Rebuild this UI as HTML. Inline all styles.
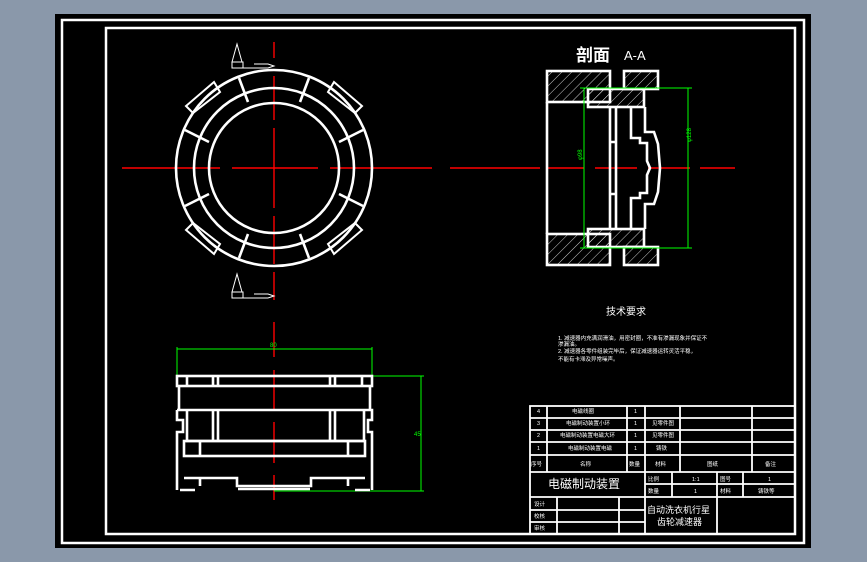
<!DOCTYPE html><html><head><meta charset="utf-8"><style>html,body{margin:0;padding:0;background:#8a98aa;width:867px;height:562px;overflow:hidden}svg{display:block}text{font-family:"Liberation Sans","Noto Sans CJK SC",sans-serif;fill:#fff}</style></head><body>
<svg width="867" height="562" viewBox="0 0 867 562">
<defs><pattern id="h" width="7" height="7" patternUnits="userSpaceOnUse" patternTransform="rotate(45)"><line x1="0" y1="0" x2="0" y2="7" stroke="#fff" stroke-width="0.8"/></pattern></defs>
<rect x="55" y="14" width="756" height="534" fill="#000"/>
<rect x="62" y="20" width="742" height="523" fill="none" stroke="#fff" stroke-width="2.5"/>
<rect x="106" y="28" width="689" height="506" fill="none" stroke="#fff" stroke-width="2.5"/>
<g stroke="#f00" stroke-width="1.4" fill="none">
<path d="M122 168H220M232 168H318M330 168H432M450 168H540M548 168H584M595 168H637M648 168H690M700 168H735"/>
<path d="M274 42V58M274 76V120M274 128V208M274 216V264M274 272V300M274 322V357M274 370V410M274 422V463M274 475V500"/>
</g>
<g stroke="#fff" stroke-width="2.6" fill="none">
<circle cx="274" cy="168" r="98"/><circle cx="274" cy="168" r="80"/><circle cx="274" cy="168" r="65"/>
<path d="M239 78L248 102M309 78L300 102M239 258L248 234M309 258L300 234M185 130L209 142M363 130L339 142M185 206L209 194M363 206L339 194"/>
<path d="M214 82L220 92L193 113L186 106ZM334 82L328 92L355 113L362 106ZM214 254L220 244L193 223L186 230ZM334 254L328 244L355 223L362 230Z" stroke-width="2"/>
</g>
<g stroke="#fff" stroke-width="1" fill="none">
<path d="M232 62L237 44L242 62ZM232 62H243V68H232ZM232 68H268M254 64H268L274 66L268 68"/>
<path d="M232 292L237 274L242 292ZM232 292H243V298H232ZM232 298H268M254 294H268L274 296L268 298"/>
</g>
<text x="576" y="61" font-size="17" font-weight="bold">剖面</text>
<text x="624" y="60" font-size="13">A-A</text>
<g stroke="#fff" stroke-width="2.6">
<rect x="547" y="71" width="63" height="31" fill="url(#h)"/><rect x="547" y="234" width="63" height="31" fill="url(#h)"/>
<rect x="624" y="71" width="34" height="18" fill="url(#h)"/><rect x="624" y="247" width="34" height="18" fill="url(#h)"/>
<rect x="588" y="89" width="56" height="18" fill="url(#h)"/><rect x="588" y="229" width="56" height="18" fill="url(#h)"/>
<path fill="none" d="M547 102V234M610 107V229M616 107V229M610 142H616M610 194H616M631 107V138H640V143H647V161L650 168L647 175V193H640V198H631V229M645 107V132H654L658 144L660 168L658 192L654 204H645V229"/>
</g>
<g stroke="#0f0" stroke-width="1" fill="none"><path d="M584 88V248M688 88V248M580 88H692M580 248H692"/></g>
<text x="578" y="160" font-size="6" transform="rotate(-90 580 158)" style="fill:#0f0">φ98</text>
<text x="684" y="145" font-size="6" style="fill:#0f0" transform="rotate(-90 686 140)">φ128</text>
<g stroke="#0f0" stroke-width="1" fill="none"><path d="M177 347V378M372 347V378M177 349H372M274 376H424M274 491H424M421 376V491"/></g>
<text x="270" y="347" font-size="6" style="fill:#0f0">80</text>
<text x="414" y="436" font-size="6" style="fill:#0f0">45</text>
<g stroke="#fff" stroke-width="2.6" fill="none">
<rect x="177" y="376" width="195" height="10"/>
<path d="M187 376V386M213 376V386M218 376V386M330 376V386M335 376V386M362 376V386"/>
<path d="M179 386V410H370V386M177 410H372V420H368V432H372V490M177 410V420H183V432H177V490"/>
<path d="M187 410V441H364V410M213 410V441M218 410V441M330 410V441M335 410V441"/>
<rect x="184" y="441" width="181" height="15"/><path d="M200 441V456M348 441V456"/>
<path d="M184 478H237V486H311V478H365M200 478V486M348 478V486M180 490H195M355 490H370M238 489H310"/>
</g>
<text x="606" y="315" font-size="10">技术要求</text>
<text x="558" y="340" font-size="5.5">1. 减速器内充满润滑油，用密封圈，不准有渗漏现象并保证不</text>
<text x="558" y="346" font-size="5.5">   渗漏油。</text>
<text x="558" y="353" font-size="5.5">2. 减速器各零件组装完毕后，保证减速器运转灵活平稳，</text>
<text x="558" y="361" font-size="5.5">不能有卡滞及异常噪声。</text>
<g stroke="#fff" stroke-width="1.8" fill="none">
<rect x="530" y="406" width="265" height="128"/>
<path d="M530 418H795M530 430H795M530 442H795M530 455H795M530 472H795M645 484H795M530 497H795M530 510H645M530 522H645"/>
<path d="M547 406V472M627 406V472M645 406V534M680 406V472M752 406V472M672 472V497M717 472V534M743 472V497M557 497V534M619 497V534"/>
</g>
<g font-size="5.5">
<text x="537" y="413">4</text><text x="572" y="413">电磁线圈</text><text x="634" y="413">1</text>
<text x="537" y="425">3</text><text x="566" y="425">电磁制动装置小环</text><text x="634" y="425">1</text><text x="652" y="425">见零件图</text>
<text x="537" y="437">2</text><text x="560" y="437">电磁制动装置电磁大环</text><text x="634" y="437">1</text><text x="652" y="437">见零件图</text>
<text x="537" y="450">1</text><text x="568" y="450">电磁制动装置电磁</text><text x="634" y="450">1</text><text x="656" y="450">铸铁</text>
<text x="531" y="466">序号</text><text x="580" y="466">名称</text><text x="629" y="466">数量</text><text x="655" y="466">材料</text><text x="707" y="466">图纸</text><text x="765" y="466">备注</text>
<text x="648" y="481">比例</text><text x="692" y="481">1:1</text><text x="720" y="481">图号</text><text x="768" y="481">1</text>
<text x="648" y="493">数量</text><text x="694" y="493">1</text><text x="720" y="493">材料</text><text x="758" y="493">铸铁等</text>
<text x="534" y="506">设计</text><text x="534" y="518">校核</text><text x="534" y="530">审核</text>
</g>
<text x="548" y="488" font-size="12">电磁制动装置</text>
<text x="647" y="513" font-size="9">自动洗衣机行星</text>
<text x="657" y="525" font-size="9">齿轮减速器</text>
</svg></body></html>
